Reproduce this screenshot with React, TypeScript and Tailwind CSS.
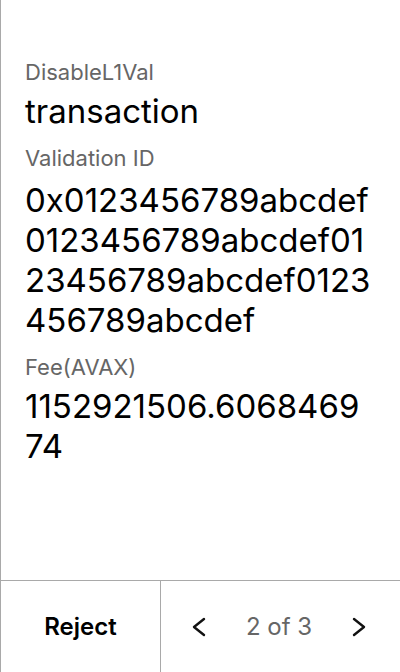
const font = { fontFamily: "Inter, 'Noto Sans', sans-serif" };

function Chevron({ dir }: { dir: "left" | "right" }) {
  return (
    <svg width="16" height="20" viewBox="0 0 16 20" fill="none">
      <polyline
        points={dir === "left" ? "13,2 3,10 13,18" : "3,2 13,10 3,18"}
        stroke="#111111"
        strokeWidth="2.4"
        strokeLinecap="round"
        strokeLinejoin="round"
      />
    </svg>
  );
}

export default function App() {
  return (
    <div
      className="w-[400px] h-[672px] flex flex-col bg-white border-l border-[#a9a9a9]"
      style={font}
    >
      {/* Details */}
      <div className="flex-1 flex flex-col pl-[24px] pr-[24px] pt-[58px] text-black">
        <span className="text-[22px] leading-[28px] text-[#666666]">DisableL1Val</span>
        <span className="mt-[5px] text-[33px] leading-[40px]">transaction</span>

        <span className="mt-[13px] text-[22px] leading-[28px] text-[#666666]">Validation ID</span>
        <span className="mt-[8px] text-[33px] leading-[40px] break-all">
          0x0123456789abcdef0123456789abcdef0123456789abcdef0123456789abcdef
        </span>

        <span className="mt-[13px] text-[22px] leading-[28px] text-[#666666]">Fee(AVAX)</span>
        <span className="mt-[5px] text-[33px] leading-[40px] break-all">1152921506.606846974</span>
      </div>

      {/* Actions */}
      <div className="h-[92px] flex border-t border-[#a9a9a9]">
        <button className="w-[160px] flex items-center justify-center border-r border-[#a9a9a9] text-[24px] font-semibold text-black">
          Reject
        </button>
        <div className="flex-1 flex items-center justify-between pl-[30px] pr-[33px]">
          <Chevron dir="left" />
          <span className="text-[24px] text-[#666666]">2 of 3</span>
          <Chevron dir="right" />
        </div>
      </div>
    </div>
  );
}
